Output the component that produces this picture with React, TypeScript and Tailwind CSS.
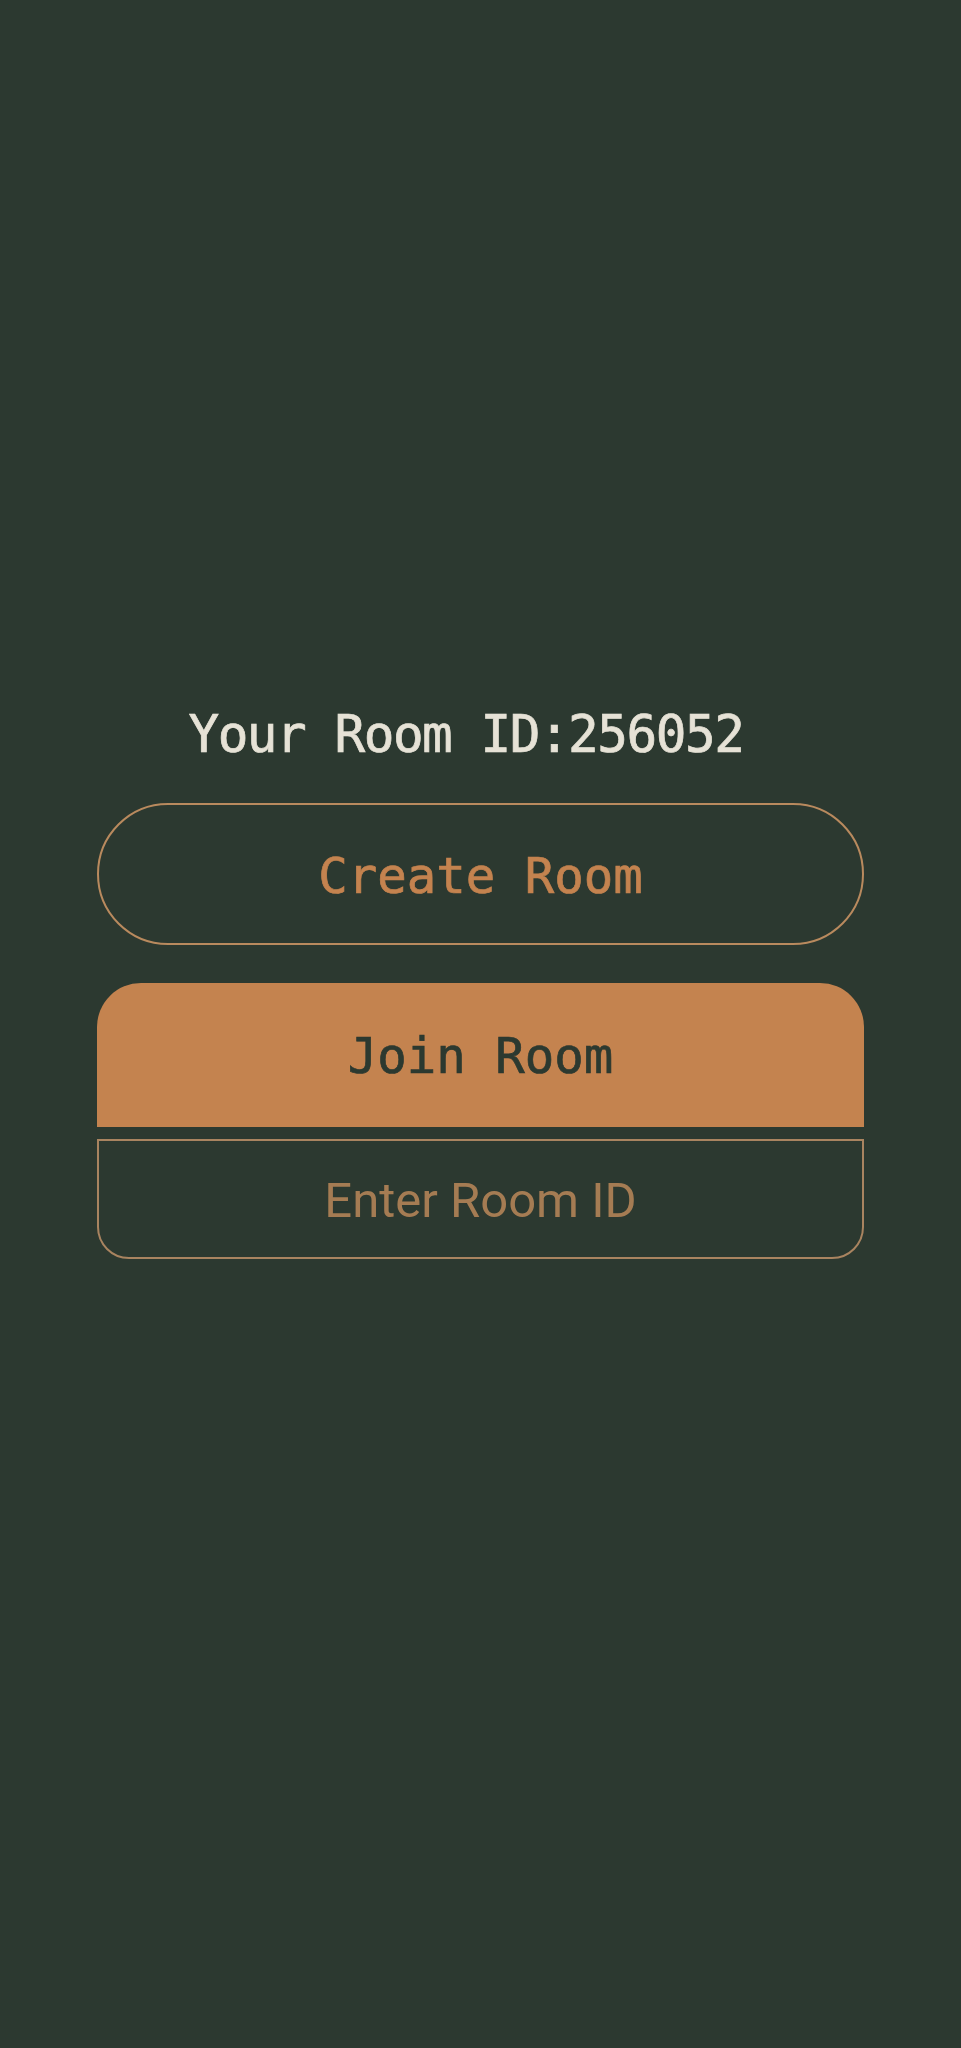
import React, { useState } from 'react';

const mono = "font-['DejaVu_Sans_Mono',monospace] [-webkit-text-stroke:0.7px_currentColor]";

export default function App() {
  const [roomId, setRoomId] = useState('');
  const myRoom = '256052';

  return (
    <div className="min-h-[2048px] w-full bg-[#2c3930] flex flex-col items-center pt-[705px]">
      <div className="w-[767px] flex flex-col">
        <p className={`${mono} text-[51px] tracking-[-1.5px] leading-[59px] text-[#e6e2d6] text-center whitespace-pre`}>
          {`Your Room ID:${myRoom} `}
        </p>

        <button
          className={`${mono} mt-[39px] h-[142px] w-full rounded-full border-2 border-[#b98a5e] pt-[6px] text-[49px] text-[#c4834f]`}
        >
          Create Room
        </button>

        <button
          className={`${mono} mt-[38px] h-[144px] w-full rounded-t-[44px] bg-[#c4834f] pt-[4px] text-[49px] text-[#2c3930]`}
        >
          Join Room
        </button>

        <input
          value={roomId}
          onChange={(e) => setRoomId(e.target.value)}
          placeholder="Enter Room ID"
          className="mt-[12px] h-[120px] w-full rounded-b-[32px] border-2 border-[#a98460] bg-transparent pt-[2px] text-center font-['Roboto',sans-serif] text-[49px] text-[#e6e2d6] placeholder:text-[#a57c53] outline-none"
        />
      </div>
    </div>
  );
}
